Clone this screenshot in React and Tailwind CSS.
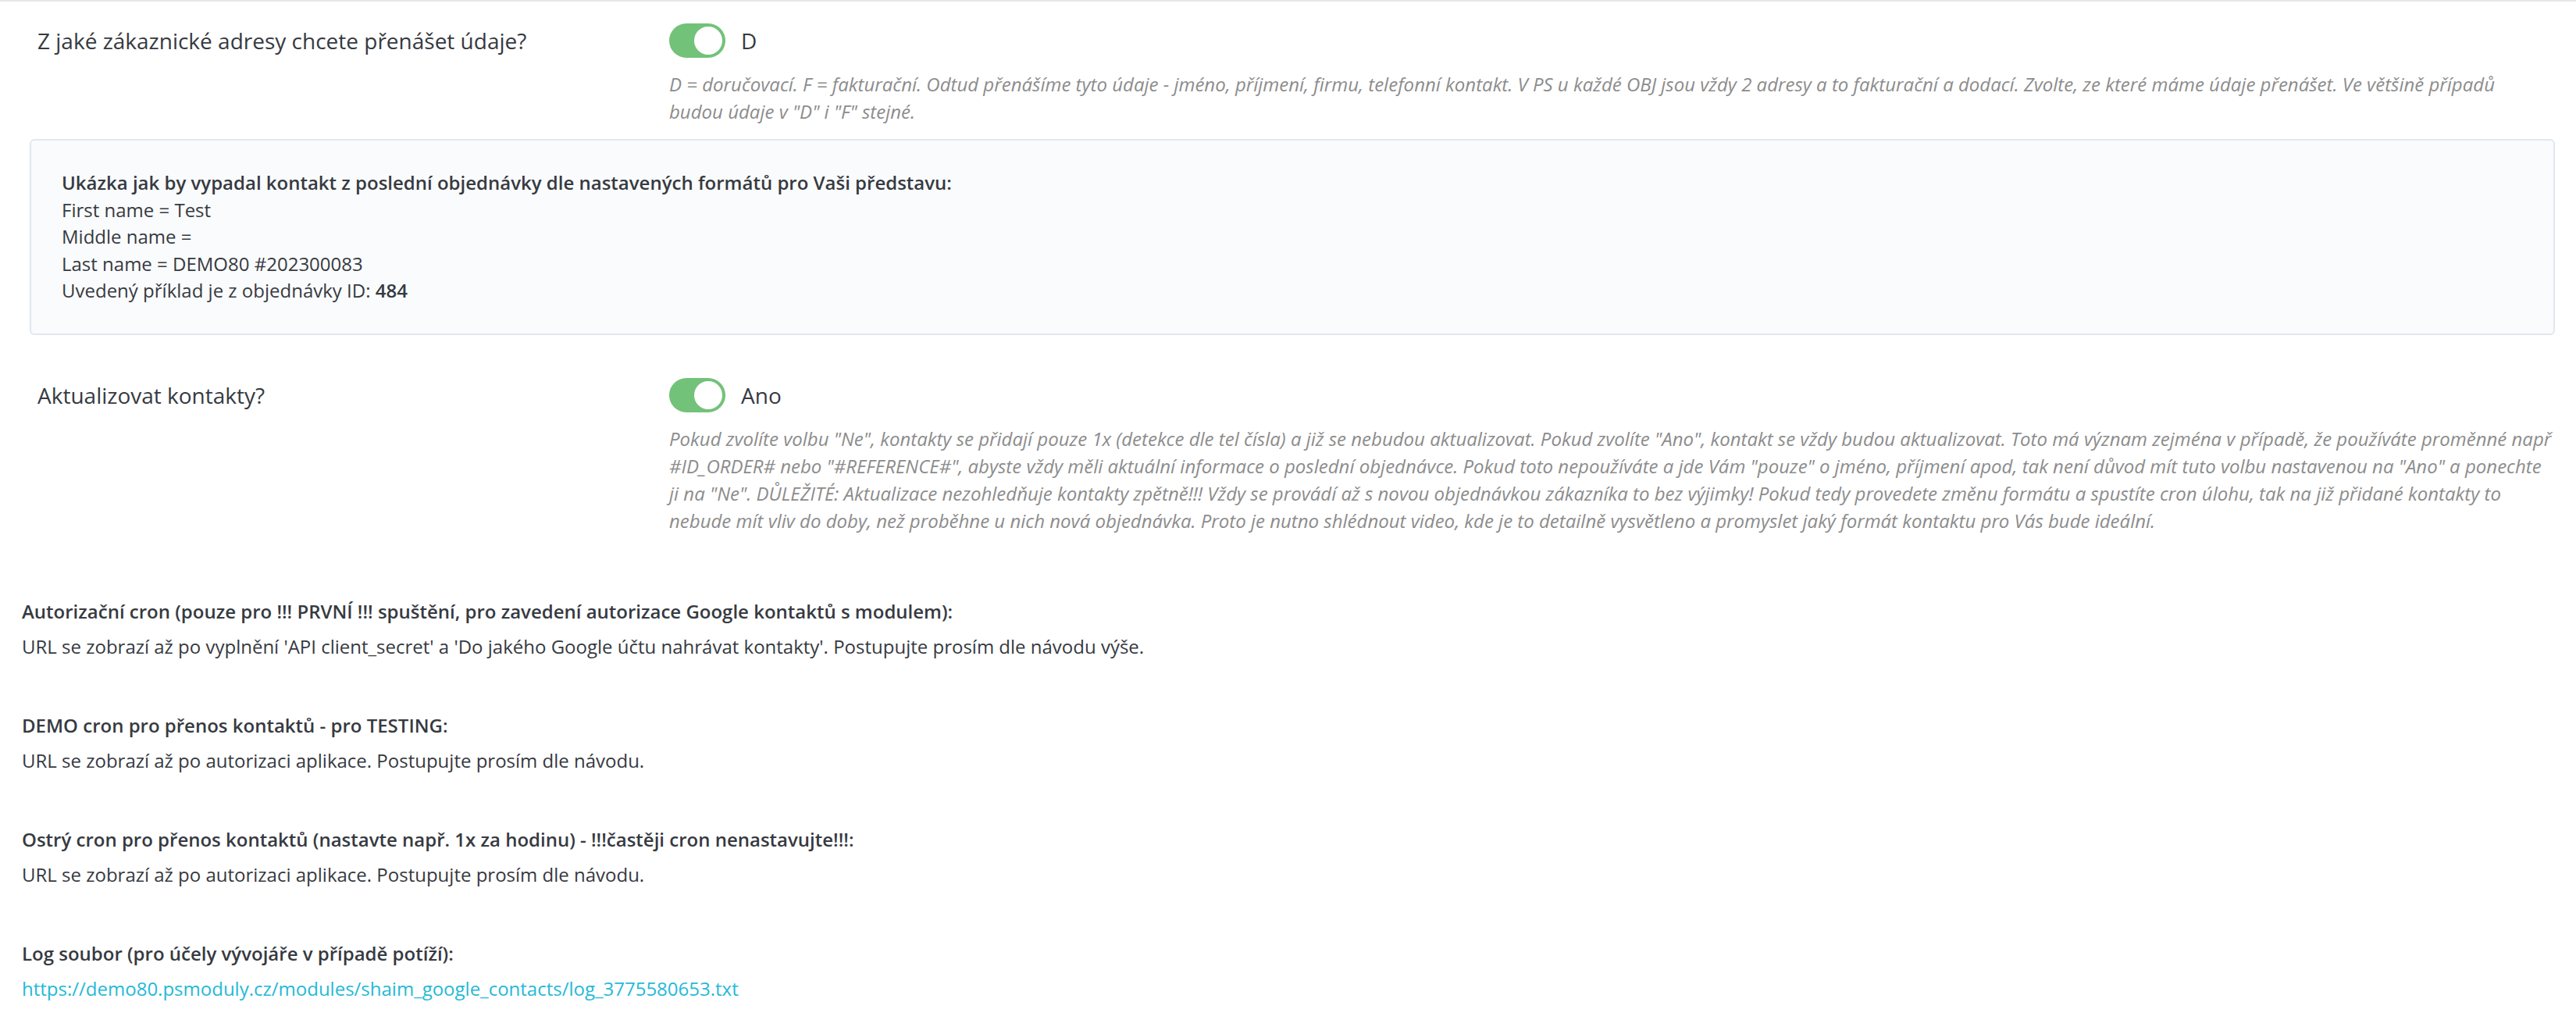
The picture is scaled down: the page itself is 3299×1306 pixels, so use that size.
import React from 'react'

// Settings screen of the Google contacts module (PrestaShop back office look)

function Toggle({ label }) {
  return (
    <div className="flex items-center h-[44px]">
      <span className="relative inline-block w-[72px] h-[44px] rounded-full bg-[#72c279]">
        <span className="absolute right-[4px] top-[4px] w-[36px] h-[36px] rounded-full bg-white" />
      </span>
      <span className="ml-[20px] text-[28px] leading-[44px] text-[#363a41]">{label}</span>
    </div>
  )
}

function FormRow({ label, value, help, helpClass = '' }) {
  return (
    <div className="flex">
      <div className="w-[857px] shrink-0 pl-[48px] text-[28px] leading-[44px] text-[#363a41]">{label}</div>
      <div className="w-[2415px]">
        <Toggle label={value} />
        <p className={`mt-[16px] text-[24px] leading-[35px] italic text-[#8c8c8c] ${helpClass}`}>{help}</p>
      </div>
    </div>
  )
}

const CRONS = [
  {
    title: 'Autorizační cron (pouze pro !!! PRVNÍ !!! spuštění, pro zavedení autorizace Google kontaktů s modulem):',
    text: "URL se zobrazí až po vyplnění 'API client_secret' a 'Do jakého Google účtu nahrávat kontakty'. Postupujte prosím dle návodu výše.",
  },
  {
    title: 'DEMO cron pro přenos kontaktů - pro TESTING:',
    text: 'URL se zobrazí až po autorizaci aplikace. Postupujte prosím dle návodu.',
  },
  {
    title: 'Ostrý cron pro přenos kontaktů (nastavte např. 1x za hodinu) - !!!častěji cron nenastavujte!!!:',
    text: 'URL se zobrazí až po autorizaci aplikace. Postupujte prosím dle návodu.',
  },
]

export default function App() {
  return (
    <div className="min-h-screen bg-white border-t-2 border-[#e4e6e8] font-['Open_Sans',sans-serif] text-[#363a41]">
      <div className="pt-[28px]">
        <FormRow
          label="Z jaké zákaznické adresy chcete přenášet údaje?"
          value="D"
          helpClass="pr-[12px]"
          help={'D = doručovací. F = fakturační. Odtud přenášíme tyto údaje - jméno, příjmení, firmu, telefonní kontakt. V PS u každé OBJ jsou vždy 2 adresy a to fakturační a dodací. Zvolte, ze které máme údaje přenášet. Ve většině případů budou údaje v "D" i "F" stejné.'}
        />
      </div>

      {/* preview of the last order's contact */}
      <div className="ml-[38px] mr-[27px] mt-[18px] rounded-[6px] border-2 border-[#e0e8ef] bg-[#fafbfc] px-[39px] py-[37px] text-[24px] leading-[34.5px]">
        <div className="font-semibold">Ukázka jak by vypadal kontakt z poslední objednávky dle nastavených formátů pro Vaši představu:</div>
        <div>First name = Test</div>
        <div>Middle name =</div>
        <div>Last name = DEMO80 #202300083</div>
        <div>Uvedený příklad je z objednávky ID: <span className="font-semibold">484</span></div>
      </div>

      <div className="mt-[55px]">
        <FormRow
          label="Aktualizovat kontakty?"
          value="Ano"
          help={'Pokud zvolíte volbu "Ne", kontakty se přidají pouze 1x (detekce dle tel čísla) a již se nebudou aktualizovat. Pokud zvolíte "Ano", kontakt se vždy budou aktualizovat. Toto má význam zejména v případě, že používáte proměnné např #ID_ORDER# nebo "#REFERENCE#", abyste vždy měli aktuální informace o poslední objednávce. Pokud toto nepoužíváte a jde Vám "pouze" o jméno, příjmení apod, tak není důvod mít tuto volbu nastavenou na "Ano" a ponechte ji na "Ne". DŮLEŽITÉ: Aktualizace nezohledňuje kontakty zpětně!!! Vždy se provádí až s novou objednávkou zákazníka to bez výjimky! Pokud tedy provedete změnu formátu a spustíte cron úlohu, tak na již přidané kontakty to nebude mít vliv do doby, než proběhne u nich nová objednávka. Proto je nutno shlédnout video, kde je to detailně vysvětleno a promyslet jaký formát kontaktu pro Vás bude ideální.'}
        />
      </div>

      <div className="mt-[81px] pl-[28px] pb-[30px] flex flex-col gap-[65px] text-[24px] leading-[36px]">
        {CRONS.map(c => (
          <div key={c.title}>
            <div className="font-semibold">{c.title}</div>
            <div className="mt-[9px]">{c.text}</div>
          </div>
        ))}
        <div>
          <div className="font-semibold">Log soubor (pro účely vývojáře v případě potíží):</div>
          <a href="#" className="mt-[9px] block text-[#25b9d7]">https://demo80.psmoduly.cz/modules/shaim_google_contacts/log_3775580653.txt</a>
        </div>
      </div>
    </div>
  )
}
